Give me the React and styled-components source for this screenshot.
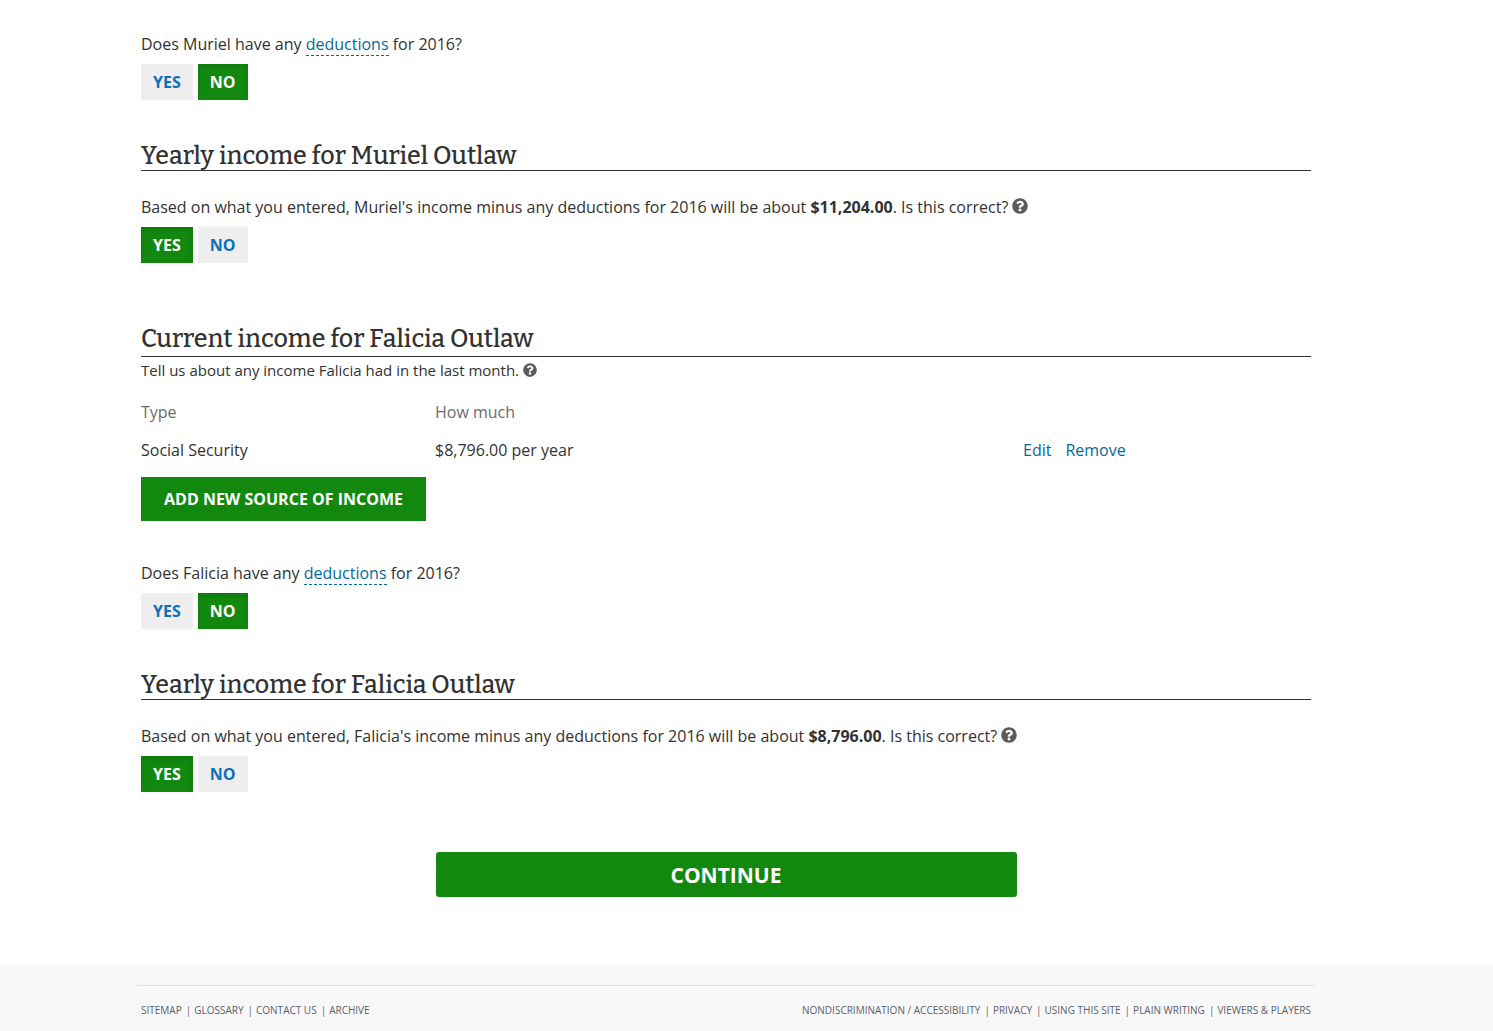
import React, { useId, useState } from 'react';
import styled, { createGlobalStyle } from 'styled-components';
import { FaQuestionCircle } from 'react-icons/fa';

const GlobalStyle = createGlobalStyle`
  *, *::before, *::after { box-sizing: border-box; }
  body {
    margin: 0;
    background: #fff;
    color: #323232;
    font: 16px/24px "Open Sans", sans-serif;
  }
  button { font-family: inherit; cursor: pointer; }
`;

const Main = styled.main`
  padding: 32px 41px 68px 0;
`;

const Container = styled.div`
  max-width: 1170px;
  margin: 0 auto;
`;

const Section = styled.section`
  margin-top: ${(p) => (p.$spacious ? 62 : 42)}px;
`;

const Heading = styled.h2`
  margin: 0;
  padding-bottom: ${(p) => (p.$loose ? 3 : 0)}px;
  border-bottom: 1px solid #323232;
  font: 500 25px/28px "Bitter", "DejaVu Serif", serif;
`;

const Question = styled.div`
  margin-top: ${(p) => p.$top || 0}px;
`;

const Prompt = styled.p`
  margin: 0 0 8px;
`;

const Hint = styled.p`
  margin: 3px 0 13px;
  font-size: 15px;
  line-height: 20px;
`;

const Link = styled.a`
  color: #046b99;
  text-decoration: none;
`;

const GlossaryLink = styled(Link)`
  border-bottom: 1px dashed #046b99;
`;

const HelpButton = styled.button`
  display: inline-flex;
  padding: 0;
  border: 0;
  background: none;
  color: #5b5b5b;
  font-size: ${(p) => (p.$small ? 14 : 16)}px;
  vertical-align: -1px;
`;

const Choices = styled.div`
  display: flex;
  gap: 5px;
`;

const Choice = styled.button`
  height: 36px;
  padding: 0 12px;
  border: 0;
  background: ${(p) => (p.$selected ? '#12890e' : '#eee')};
  box-shadow: ${(p) => (p.$selected ? 'inset 0 3px 5px rgba(0, 0, 0, 0.125)' : 'none')};
  color: ${(p) => (p.$selected ? '#fff' : '#0d71b9')};
  font-size: 16px;
  font-weight: 700;
  line-height: 24px;
`;

const IncomeTable = styled.table`
  width: calc(100% + 6px);
  margin-right: -6px;
  border-collapse: collapse;
  table-layout: fixed;
`;

const Column = styled.col`
  width: ${(p) => p.$width};
`;

const HeadCell = styled.th`
  height: 38px;
  padding: 0;
  color: #6b6b6b;
  font-weight: 400;
  text-align: left;
`;

const Cell = styled.td`
  height: 38px;
  padding: 0;
`;

const Actions = styled.div`
  display: flex;
  gap: 14px;
`;

const AddButton = styled.button`
  display: block;
  height: 44px;
  margin: 8px 0 0;
  padding: 0 23px;
  border: 0;
  background: #12890e;
  color: #fff;
  font-size: 16px;
  font-weight: 700;
  line-height: 24px;
`;

const ContinueButton = styled.button`
  display: block;
  width: calc(50% - 4px);
  height: 45px;
  margin: 60px auto 0;
  padding: 0;
  border: 0;
  border-radius: 3px;
  background: #12890e;
  color: #fff;
  font-size: 21px;
  font-weight: 700;
  line-height: 28px;
`;

const Footer = styled.footer`
  padding: 20px 41px 11px 0;
  background: #f8f8f8;
`;

const FooterInner = styled.div`
  display: flex;
  justify-content: space-between;
  max-width: 1178px;
  margin: 0 auto;
  padding: 14px 4px 0;
  border-top: 1px solid #e0e0e0;
`;

const FooterList = styled.ul`
  display: flex;
  margin: 0;
  padding: 0;
  list-style: none;
  font-size: 10px;
  line-height: 20px;
  color: #5b616b;
`;

const FooterItem = styled.li`
  & + &::before {
    content: "|";
    margin: 0 3px 0 4px;
  }
`;

const FooterLink = styled.a`
  color: #5b616b;
  text-decoration: none;
`;

function Help({ small }) {
  return (
    <HelpButton type="button" aria-label="Help" $small={small}>
      <FaQuestionCircle />
    </HelpButton>
  );
}

function YesNo({ initial, top, children }) {
  const [answer, setAnswer] = useState(initial);
  const id = useId();
  return (
    <Question $top={top}>
      <Prompt id={id}>{children}</Prompt>
      <Choices role="group" aria-labelledby={id}>
        {['YES', 'NO'].map((value) => (
          <Choice
            key={value}
            type="button"
            aria-pressed={answer === value}
            $selected={answer === value}
            onClick={() => setAnswer(value)}
          >
            {value}
          </Choice>
        ))}
      </Choices>
    </Question>
  );
}

function Deductions({ name, top }) {
  return (
    <YesNo initial="NO" top={top}>
      Does {name} have any <GlossaryLink href="#deductions">deductions</GlossaryLink> for 2016?
    </YesNo>
  );
}

function YearlyIncome({ name, amount }) {
  return (
    <Section>
      <Heading>Yearly income for {name} Outlaw</Heading>
      <YesNo initial="YES" top={24}>
        Based on what you entered, {name}'s income minus any deductions for 2016 will be about{' '}
        <strong>{amount}</strong>. Is this correct? <Help />
      </YesNo>
    </Section>
  );
}

function FooterLinks({ items }) {
  return (
    <FooterList>
      {items.map((item) => (
        <FooterItem key={item}>
          <FooterLink href="#">{item}</FooterLink>
        </FooterItem>
      ))}
    </FooterList>
  );
}

export default function App() {
  return (
    <>
      <GlobalStyle />
      <Main>
        <Container>
          <Deductions name="Muriel" />
          <YearlyIncome name="Muriel" amount="$11,204.00" />

          <Section $spacious>
            <Heading $loose>Current income for Falicia Outlaw</Heading>
            <Hint>
              Tell us about any income Falicia had in the last month. <Help small />
            </Hint>
            <IncomeTable>
              <colgroup>
                <Column $width="25%" />
                <Column $width="50%" />
                <Column $width="25%" />
              </colgroup>
              <thead>
                <tr>
                  <HeadCell scope="col">Type</HeadCell>
                  <HeadCell scope="col">How much</HeadCell>
                  <HeadCell scope="col" aria-label="Actions" />
                </tr>
              </thead>
              <tbody>
                <tr>
                  <Cell>Social Security</Cell>
                  <Cell>$8,796.00 per year</Cell>
                  <Cell>
                    <Actions>
                      <Link href="#edit">Edit</Link>
                      <Link href="#remove">Remove</Link>
                    </Actions>
                  </Cell>
                </tr>
              </tbody>
            </IncomeTable>
            <AddButton type="button">ADD NEW SOURCE OF INCOME</AddButton>
            <Deductions name="Falicia" top={40} />
          </Section>

          <YearlyIncome name="Falicia" amount="$8,796.00" />
          <ContinueButton type="button">CONTINUE</ContinueButton>
        </Container>
      </Main>
      <Footer>
        <FooterInner>
          <FooterLinks items={['SITEMAP', 'GLOSSARY', 'CONTACT US', 'ARCHIVE']} />
          <FooterLinks
            items={[
              'NONDISCRIMINATION / ACCESSIBILITY',
              'PRIVACY',
              'USING THIS SITE',
              'PLAIN WRITING',
              'VIEWERS & PLAYERS',
            ]}
          />
        </FooterInner>
      </Footer>
    </>
  );
}
